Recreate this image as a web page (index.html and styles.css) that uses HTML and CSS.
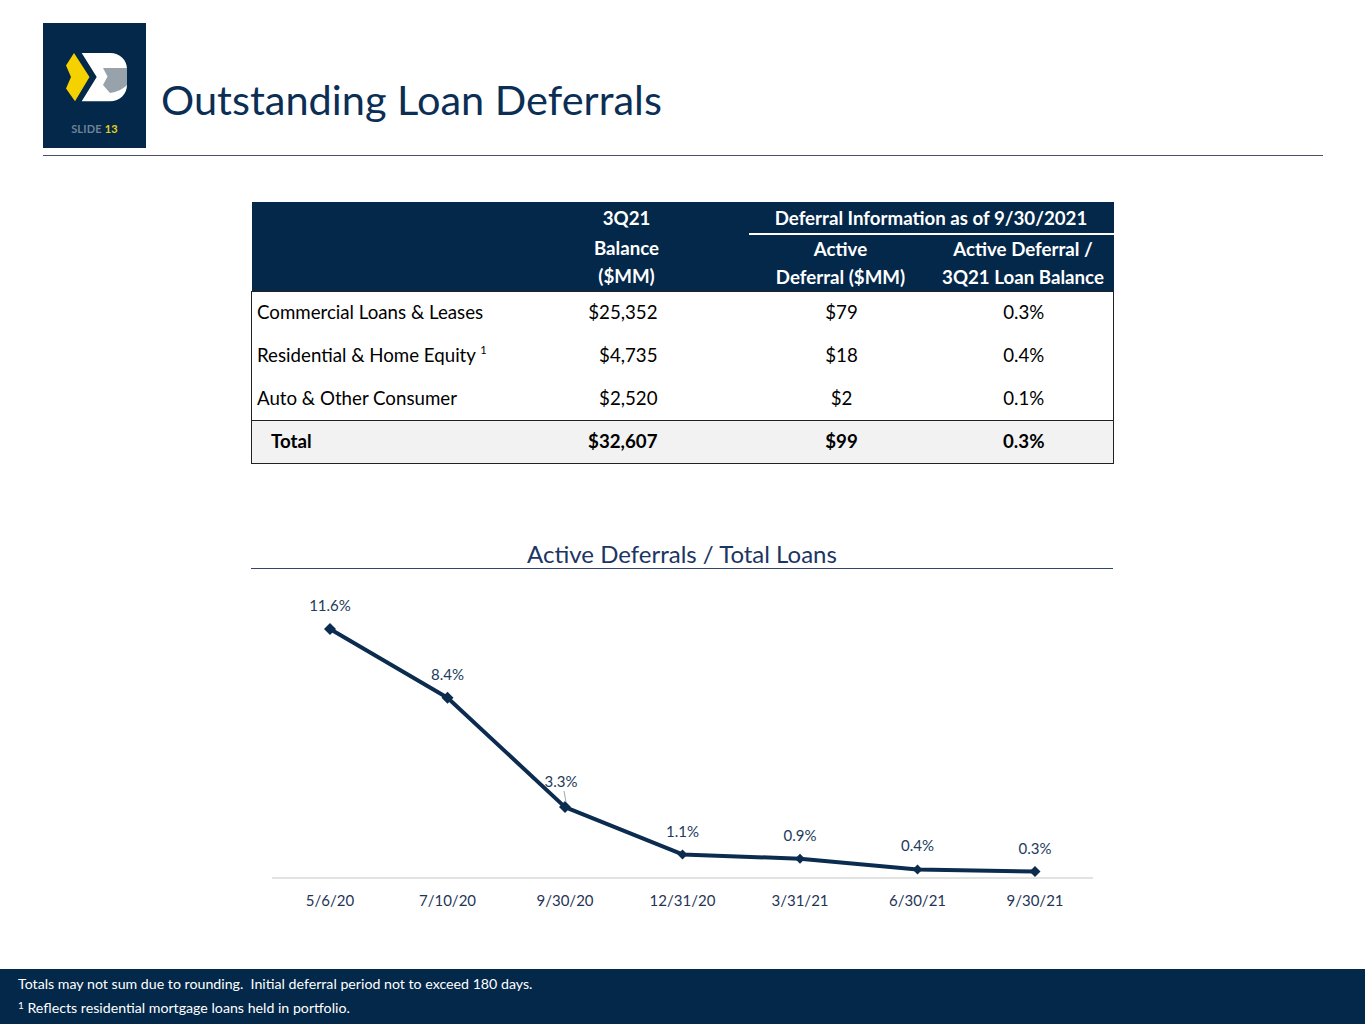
FILE: index.html
```html
<!DOCTYPE html>
<html lang="en">
<head>
<meta charset="utf-8">
<title>Outstanding Loan Deferrals</title>
<link rel="stylesheet" href="styles.css">
</head>
<body>
<div class="slide">
  <header class="top">
    <div class="logo">
      <svg class="mark" width="103" height="90" viewBox="0 0 103 90">
        <polygon class="yel" points="31,30 46.5,54 32,78.3 23,65.5 28,54 23,42.5"/>
        <path class="wht" d="M38.7,30 H67 C77,30 84,37 84,46 V62 C84,71 77,78.3 67,78.3 H38.7 L53.7,54 Z"/>
        <path class="gry" d="M60,45 H84 V62 C80,66 74,69 67,70 L60,62 L64.5,53.5 Z"/>
      </svg>
      <div class="slide-no"><span class="sl">SLIDE</span> <span class="num">13</span></div>
    </div>
    <h1 class="title">Outstanding Loan Deferrals</h1>
  </header>
  <div class="rule"></div>

  <table class="loans">
    <colgroup>
      <col class="c-label"><col class="c-bal"><col class="c-sp"><col class="c-act"><col class="c-pct">
    </colgroup>
    <thead>
      <tr class="h1">
        <th></th><th>3Q21</th><th></th><th colspan="2" class="group">Deferral Information as of 9/30/2021</th>
      </tr>
      <tr class="h2">
        <th></th><th>Balance<br>($MM)</th><th></th><th>Active<br>Deferral ($MM)</th><th>Active Deferral /<br>3Q21 Loan Balance</th>
      </tr>
    </thead>
    <tbody>
      <tr><td class="lbl">Commercial Loans &amp; Leases</td><td class="bal">$25,352</td><td></td><td class="ctr">$79</td><td class="ctr">0.3%</td></tr>
      <tr><td class="lbl">Residential &amp; Home Equity <sup>1</sup></td><td class="bal">$4,735</td><td></td><td class="ctr">$18</td><td class="ctr">0.4%</td></tr>
      <tr><td class="lbl">Auto &amp; Other Consumer</td><td class="bal">$2,520</td><td></td><td class="ctr">$2</td><td class="ctr">0.1%</td></tr>
      <tr class="total"><td class="lbl">Total</td><td class="bal">$32,607</td><td></td><td class="ctr">$99</td><td class="ctr">0.3%</td></tr>
    </tbody>
  </table>

  <section class="chart">
    <h2 class="chart-title">Active Deferrals / Total Loans</h2>
    <svg class="plot" width="862" height="360" viewBox="0 0 862 360">
      <line class="axis" x1="21" y1="309" x2="842" y2="309"/>
      <polyline class="series" points="79,60 196.5,128.7 314,238.1 431.5,285.4 549,289.7 666.5,300.4 784,302.6"/>
      <g class="marks">
        <polygon points="79,54 85,60 79,66 73,60"/>
        <polygon points="196.5,122.7 202.5,128.7 196.5,134.7 190.5,128.7"/>
        <polygon points="314,232.1 320,238.1 314,244.1 308,238.1"/>
        <polygon points="431.5,280.4 436.5,285.4 431.5,290.4 426.5,285.4"/>
        <polygon points="549,284.7 554,289.7 549,294.7 544,289.7"/>
        <polygon points="666.5,295.4 671.5,300.4 666.5,305.4 661.5,300.4"/>
        <polygon points="784,297.1 789.5,302.6 784,308.1 778.5,302.6"/>
      </g>
      <line class="leader" x1="313" y1="222" x2="315" y2="233"/>
      <g class="dlabels">
        <text x="79" y="42">11.6%</text>
        <text x="196.5" y="111">8.4%</text>
        <text x="310" y="218">3.3%</text>
        <text x="431.5" y="268">1.1%</text>
        <text x="549" y="272">0.9%</text>
        <text x="666.5" y="282">0.4%</text>
        <text x="784" y="285">0.3%</text>
      </g>
      <g class="xlabels">
        <text x="79" y="337">5/6/20</text>
        <text x="196.5" y="337">7/10/20</text>
        <text x="314" y="337">9/30/20</text>
        <text x="431.5" y="337">12/31/20</text>
        <text x="549" y="337">3/31/21</text>
        <text x="666.5" y="337">6/30/21</text>
        <text x="784" y="337">9/30/21</text>
      </g>
    </svg>
  </section>

  <footer class="foot">
    <p>Totals may not sum due to rounding.&nbsp; Initial deferral period not to exceed 180 days.</p>
    <p><sup>1</sup> Reflects residential mortgage loans held in portfolio.</p>
  </footer>
</div>
</body>
</html>
```

FILE: styles.css
```css
* { box-sizing: border-box; }
html, body { margin: 0; padding: 0; background: #ffffff; }
body { font-family: Lato, "Open Sans", "Liberation Sans", sans-serif; color: #000; }

.slide {
  width: 1365px;
  height: 1024px;
  display: flex;
  flex-direction: column;
  overflow: hidden;
}

.top {
  display: flex;
  align-items: flex-start;
  padding: 23px 0 0 43px;
}

.logo {
  width: 103px;
  height: 125px;
  background: #03284a;
  display: flex;
  flex-direction: column;
  align-items: center;
}
.mark { display: block; }
.yel { fill: #f5d100; }
.wht { fill: #ffffff; }
.gry { fill: #98a2ab; }
.slide-no {
  margin-top: 9px;
  font-size: 11px;
  font-weight: 700;
  letter-spacing: 0.2px;
}
.slide-no .sl { color: #6f8197; }
.slide-no .num { color: #e3d21a; }

.title {
  margin: 51px 0 0 15px;
  font-size: 41.5px;
  line-height: 50px;
  font-weight: 400;
  color: #0b2e55;
}

.rule {
  margin: 7px 0 0 43px;
  width: 1280px;
  height: 1px;
  background: #4b5066;
}

.loans {
  margin: 46px 0 0 251px;
  width: 862px;
  table-layout: fixed;
  border-collapse: collapse;
  font-size: 18.7px;
}
.c-label { width: 309px; }
.c-bal { width: 132px; }
.c-sp { width: 56px; }
.c-act { width: 184px; }
.c-pct { width: 181px; }

.loans thead th {
  background: #03284a;
  color: #ffffff;
  font-weight: 700;
  text-align: center;
  padding: 0;
}
.loans .h1 th { height: 31px; line-height: 30px; vertical-align: top; padding-top: 1px; }
.loans .h1 th.group { border-bottom: 2px solid #ffffff; }
.loans .h2 th { height: 56px; line-height: 28px; vertical-align: top; }

.loans tbody td {
  height: 43px;
  padding: 0 0 2px 0;
  vertical-align: middle;
}
.loans tbody { border: 1px solid #222; }
.loans tbody tr:first-child td { border-top: 1px solid #222; }
.loans .lbl { padding-left: 5px; }
.loans .bal { text-align: right; padding-right: 35px; }
.loans .ctr { text-align: center; padding-left: 2px; }
.loans sup { font-size: 11px; vertical-align: 8px; line-height: 0; }
.loans .total td {
  background: #f2f2f2;
  font-weight: 700;
  border-top: 1px solid #222;
}
.loans .total .lbl { padding-left: 19px; }

.chart {
  margin: 76px 0 0 251px;
  width: 862px;
}
.chart-title {
  margin: 0;
  font-size: 24px;
  line-height: 28px;
  font-weight: 400;
  color: #1c3563;
  text-align: center;
  border-bottom: 1px solid #34456d;
}
.plot { display: block; }
.axis { stroke: #d9d9d9; stroke-width: 1.5; }
.series { fill: none; stroke: #0b2c4f; stroke-width: 4; stroke-linejoin: round; }
.marks polygon { fill: #0b2c4f; }
.leader { stroke: #a0a8b5; stroke-width: 1; }
.dlabels text {
  font-family: Lato, "Open Sans", sans-serif;
  font-size: 15px;
  fill: #233a5c;
  text-anchor: middle;
}
.xlabels text {
  font-family: Lato, "Open Sans", sans-serif;
  font-size: 15px;
  fill: #1f3557;
  text-anchor: middle;
}

.foot {
  margin-top: auto;
  height: 55px;
  background: #03284a;
  color: #ffffff;
  padding: 3px 0 0 18px;
  font-size: 14.2px;
}
.foot p { margin: 0; line-height: 24px; }
.foot sup { font-size: 10px; vertical-align: 4px; line-height: 0; }
```
